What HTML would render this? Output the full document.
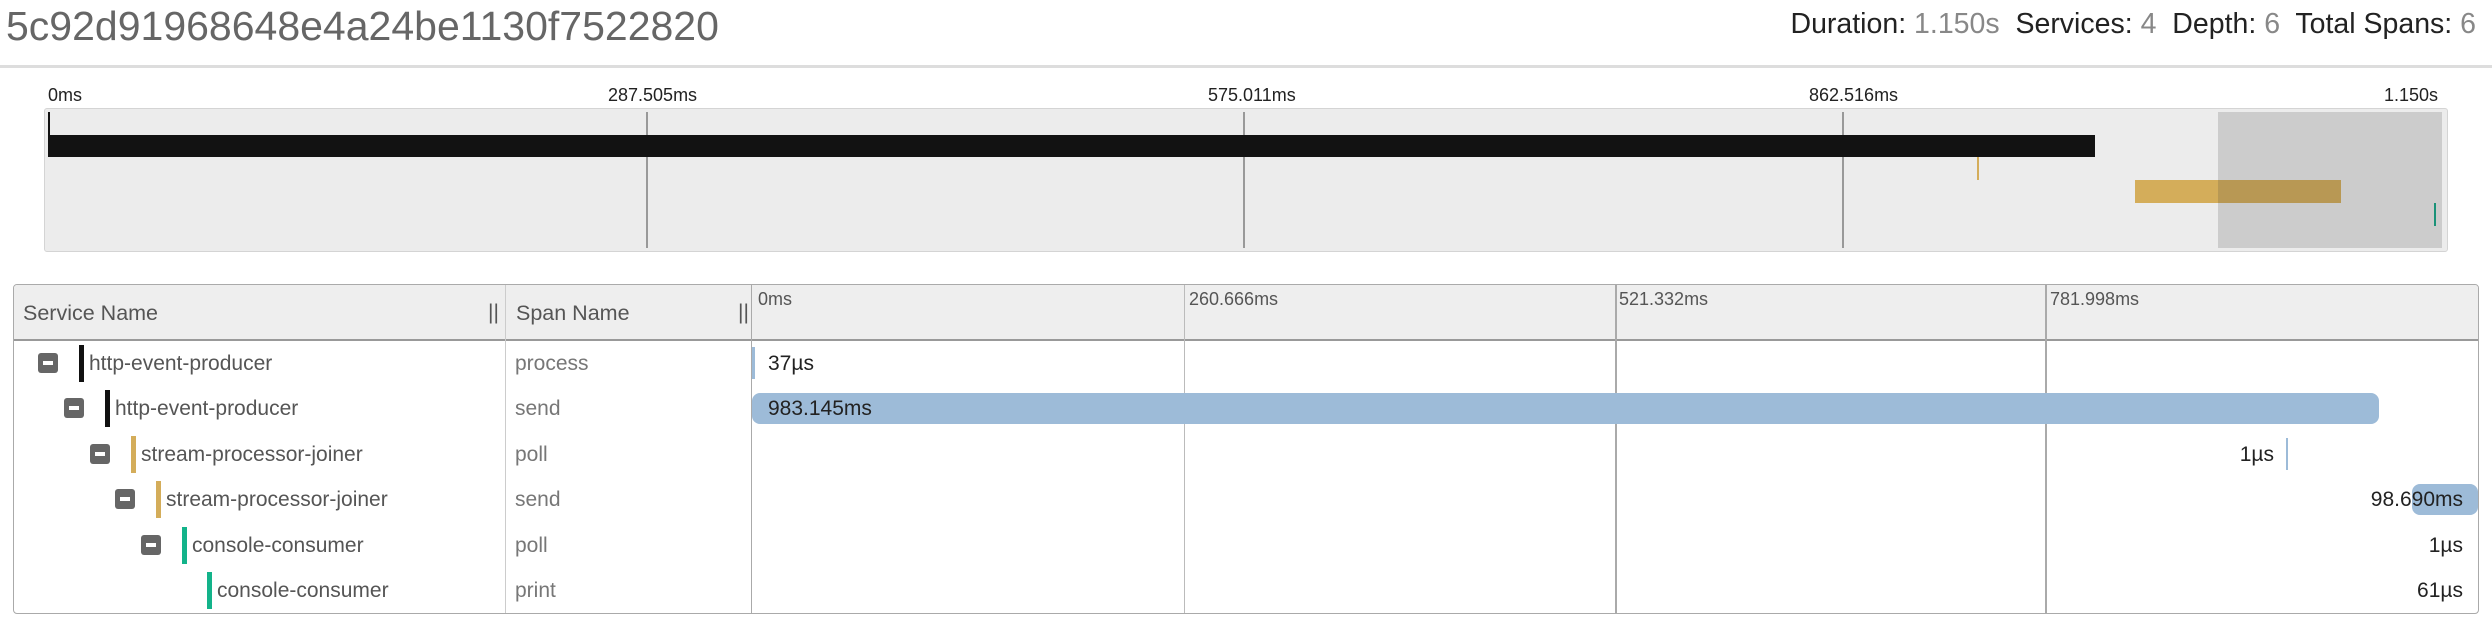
<!DOCTYPE html>
<html><head><meta charset="utf-8"><style>
*{margin:0;padding:0;box-sizing:border-box}
body{width:2492px;height:638px;background:#fff;font-family:"Liberation Sans",sans-serif;position:relative;overflow:hidden}
.a{position:absolute;white-space:nowrap}
.t{font-size:18px;color:#222}
.row{position:absolute;left:0;width:100%;height:45px}
.ico{position:absolute;width:20px;height:20px;background:#666;border-radius:3px;top:12px}
.ico:after{content:"";position:absolute;left:5px;top:8px;width:10px;height:4px;background:#fff}
.cb{position:absolute;width:5px;height:37px;top:4px}
.sn{position:absolute;top:11px;font-size:21px;color:#555}
.sp{position:absolute;left:515px;top:11px;font-size:21px;color:#777}
.tl{position:absolute;top:11px;font-size:21px;color:#222}
</style></head><body>
<div class="a" style="left:6px;top:3px;font-size:41px;color:#666">5c92d91968648e4a24be1130f7522820</div>
<div class="a" style="right:16px;top:8px;font-size:28.5px;color:#222">Duration: <span style="color:#888">1.150s</span>&nbsp; Services: <span style="color:#888">4</span>&nbsp; Depth: <span style="color:#888">6</span>&nbsp; Total Spans: <span style="color:#888">6</span></div>
<div class="a" style="left:0;top:65px;width:2492px;height:3px;background:#ddd"></div>

<div class="a t" style="left:48px;top:85px">0ms</div>
<div class="a t" style="left:608px;top:85px">287.505ms</div>
<div class="a t" style="left:1208px;top:85px">575.011ms</div>
<div class="a t" style="left:1809px;top:85px">862.516ms</div>
<div class="a t" style="left:2384px;top:85px">1.150s</div>
<div class="a" style="left:44px;top:108px;width:2404px;height:144px;background:#ececec;border:1px solid #d4d4d4;border-radius:3px"></div>
<div class="a" style="left:646px;top:112px;width:2px;height:136px;background:#999"></div>
<div class="a" style="left:1243px;top:112px;width:2px;height:136px;background:#999"></div>
<div class="a" style="left:1842px;top:112px;width:2px;height:136px;background:#999"></div>
<div class="a" style="left:48px;top:112px;width:2px;height:24px;background:#111"></div>
<div class="a" style="left:48px;top:135px;width:2047px;height:22px;background:#121212"></div>
<div class="a" style="left:1977px;top:157px;width:2px;height:23px;background:#d4ad5a"></div>
<div class="a" style="left:2135px;top:180px;width:206px;height:23px;background:#d4ad5a"></div>
<div class="a" style="left:2434px;top:203px;width:2px;height:23px;background:#13a585"></div>
<div class="a" style="left:2218px;top:112px;width:224px;height:136px;background:rgba(60,60,60,0.18)"></div>

<div class="a" style="left:13px;top:284px;width:2466px;height:330px;border:1px solid #aaa;border-radius:4px;overflow:hidden">
 <div class="a" style="left:0;top:0;width:100%;height:56px;background:#eee;border-bottom:2px solid #999"></div>
 <div class="a" style="left:491px;top:0;width:1px;height:330px;background:#ccc"></div>
 <div class="a" style="left:737px;top:0;width:1px;height:330px;background:#aaa"></div>
 <div class="a" style="left:1170px;top:0;width:1px;height:330px;background:#bbb"></div>
 <div class="a" style="left:1601px;top:0;width:2px;height:330px;background:#aaa"></div>
 <div class="a" style="left:2031px;top:0;width:2px;height:330px;background:#aaa"></div>
 <div class="a" style="left:9px;top:16px;font-size:21.5px;color:#555">Service Name</div>
 <div class="a" style="left:474px;top:16px;font-size:21px;color:#555">||</div>
 <div class="a" style="left:502px;top:16px;font-size:21.5px;color:#555">Span Name</div>
 <div class="a" style="left:724px;top:16px;font-size:21px;color:#555">||</div>
 <div class="a" style="left:744px;top:4px;font-size:18px;color:#555">0ms</div>
 <div class="a" style="left:1175px;top:4px;font-size:18px;color:#555">260.666ms</div>
 <div class="a" style="left:1605px;top:4px;font-size:18px;color:#555">521.332ms</div>
 <div class="a" style="left:2036px;top:4px;font-size:18px;color:#555">781.998ms</div>
</div>

<div class="a" style="left:0;top:341px;width:2492px;height:272px">
 <div class="row" style="top:0">
  <div class="ico" style="left:38px"></div><div class="cb" style="left:79px;background:#111"></div>
  <div class="sn" style="left:89px">http-event-producer</div><div class="sp">process</div>
  <div class="a" style="left:752px;top:6px;width:3px;height:32px;background:#9dbbd8"></div>
  <div class="tl" style="left:768px">37µs</div>
 </div>
 <div class="row" style="top:45px">
  <div class="ico" style="left:64px"></div><div class="cb" style="left:105px;background:#111"></div>
  <div class="sn" style="left:115px">http-event-producer</div><div class="sp">send</div>
  <div class="a" style="left:752px;top:7px;width:1627px;height:31px;background:#9dbbd8;border-radius:8px"></div>
  <div class="tl" style="left:768px">983.145ms</div>
 </div>
 <div class="row" style="top:91px">
  <div class="ico" style="left:90px"></div><div class="cb" style="left:131px;background:#d4ad5a"></div>
  <div class="sn" style="left:141px">stream-processor-joiner</div><div class="sp">poll</div>
  <div class="a" style="left:2286px;top:6px;width:2px;height:32px;background:#9dbbd8"></div>
  <div class="tl" style="right:218px">1µs</div>
 </div>
 <div class="row" style="top:136px">
  <div class="ico" style="left:115px"></div><div class="cb" style="left:156px;background:#d4ad5a"></div>
  <div class="sn" style="left:166px">stream-processor-joiner</div><div class="sp">send</div>
  <div class="a" style="left:2412px;top:7px;width:66px;height:31px;background:#9dbbd8;border-radius:8px"></div>
  <div class="tl" style="right:29px">98.690ms</div>
 </div>
 <div class="row" style="top:182px">
  <div class="ico" style="left:141px"></div><div class="cb" style="left:182px;background:#13b38a"></div>
  <div class="sn" style="left:192px">console-consumer</div><div class="sp">poll</div>
  <div class="tl" style="right:29px">1µs</div>
 </div>
 <div class="row" style="top:227px">
  <div class="cb" style="left:207px;background:#13b38a"></div>
  <div class="sn" style="left:217px">console-consumer</div><div class="sp">print</div>
  <div class="tl" style="right:29px">61µs</div>
 </div>
</div>
</body></html>
